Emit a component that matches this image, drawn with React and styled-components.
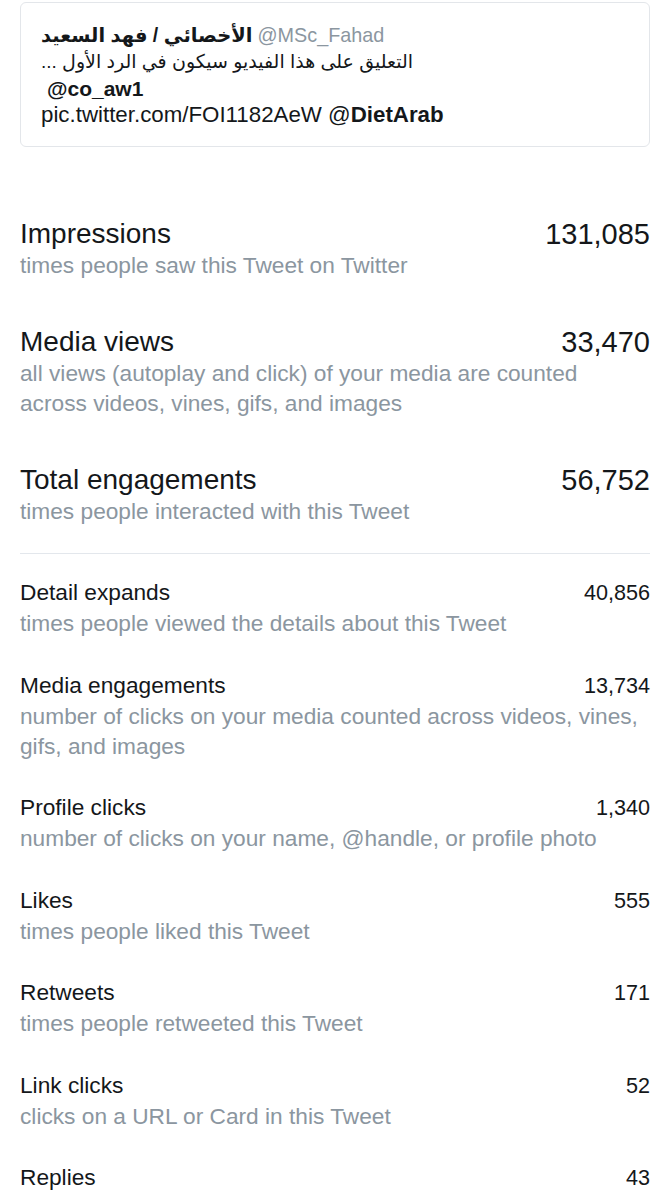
import styled, { createGlobalStyle } from "styled-components";

const GlobalStyle = createGlobalStyle`
    body {
        margin: 0;
        background: #ffffff;
        font-family: "Liberation Sans", "DejaVu Sans", sans-serif;
        color: #14171a;
    }
`;

const bigStats = [
    { title: "Impressions", value: "131,085", desc: "times people saw this Tweet on Twitter" },
    { title: "Media views", value: "33,470", desc: "all views (autoplay and click) of your media are counted across videos, vines, gifs, and images" },
    { title: "Total engagements", value: "56,752", desc: "times people interacted with this Tweet" },
];

const smallStats = [
    { title: "Detail expands", value: "40,856", desc: "times people viewed the details about this Tweet" },
    { title: "Media engagements", value: "13,734", desc: "number of clicks on your media counted across videos, vines, gifs, and images" },
    { title: "Profile clicks", value: "1,340", desc: "number of clicks on your name, @handle, or profile photo" },
    { title: "Likes", value: "555", desc: "times people liked this Tweet" },
    { title: "Retweets", value: "171", desc: "times people retweeted this Tweet" },
    { title: "Link clicks", value: "52", desc: "clicks on a URL or Card in this Tweet" },
    { title: "Replies", value: "43" },
];

export default function App() {
    return (
        <Page>
            <GlobalStyle />
            <TweetCard>
                <TweetLine>
                    <Name><bdi dir="rtl">الأخصائي / فهد السعيد</bdi></Name>
                    <Handle>@MSc_Fahad</Handle>
                </TweetLine>
                <TweetLine>
                    <bdi dir="rtl">التعليق على هذا الفيديو سيكون في الرد الأول ...</bdi>
                </TweetLine>
                <TweetLine size="21px">
                    <Mention indent>@co_aw1</Mention>
                </TweetLine>
                <TweetLine size="22.3px">
                    pic.twitter.com/FOI1182AeW @<Mention>DietArab</Mention>
                </TweetLine>
            </TweetCard>

            <BigList>
                {bigStats.map((s) => (
                    <StatRow key={s.title}>
                        <StatHeader>
                            <BigTitle>{s.title}</BigTitle>
                            <BigValue>{s.value}</BigValue>
                        </StatHeader>
                        {s.desc && <Description>{s.desc}</Description>}
                    </StatRow>
                ))}
            </BigList>

            <Divider />

            <SmallList>
                {smallStats.map((s) => (
                    <StatRow key={s.title}>
                        <StatHeader>
                            <SmallTitle>{s.title}</SmallTitle>
                            <SmallValue>{s.value}</SmallValue>
                        </StatHeader>
                        {s.desc && <Description>{s.desc}</Description>}
                    </StatRow>
                ))}
            </SmallList>
        </Page>
    );
}

const Page = styled.div`
    padding: 2px 20px 0 20px;
    display: flex;
    flex-direction: column;
`;

const TweetCard = styled.div`
    border: 1px solid #e3e6ea;
    border-radius: 6px;
    padding: 19px 20px 20px 20px;
    height: 145px;
    box-sizing: border-box;
    font-size: 19px;
    color: #14171a;
`;

const TweetLine = styled.div`
    white-space: nowrap;
    font-size: ${(p) => p.size || "19px"};
    line-height: 26.3px;
`;

const Name = styled.span`
    font-weight: 700;
    font-size: 19.5px;
`;

const Handle = styled.span`
    color: #8b96a0;
    margin-left: 5px;
    font-size: 19.8px;
`;

const Mention = styled.span`
    font-weight: 700;
    padding-left: ${(p) => (p.indent ? "6px" : "0")};
`;

const BigList = styled.div`
    display: flex;
    flex-direction: column;
    gap: 46px;
    margin-top: 71px;
`;

const SmallList = styled.div`
    display: flex;
    flex-direction: column;
    gap: 31.5px;
    margin-top: 23px;
`;

const StatRow = styled.div`
    display: flex;
    flex-direction: column;
`;

const StatHeader = styled.div`
    display: flex;
    justify-content: space-between;
    align-items: center;
`;

const BigTitle = styled.span`
    font-size: 28px;
    line-height: 32px;
    color: #14171a;
`;

const BigValue = styled(BigTitle)`
    font-size: 29px;
`;

const SmallTitle = styled.span`
    font-size: 22.7px;
    line-height: 31px;
    color: #14171a;
`;

const SmallValue = styled(SmallTitle)`
    font-size: 21.6px;
`;

const Description = styled.div`
    font-size: 22.7px;
    line-height: 30px;
    color: #8b96a0;
`;

const Divider = styled.div`
    height: 1px;
    background: #e3e7ec;
    margin-top: 27px;
`;
